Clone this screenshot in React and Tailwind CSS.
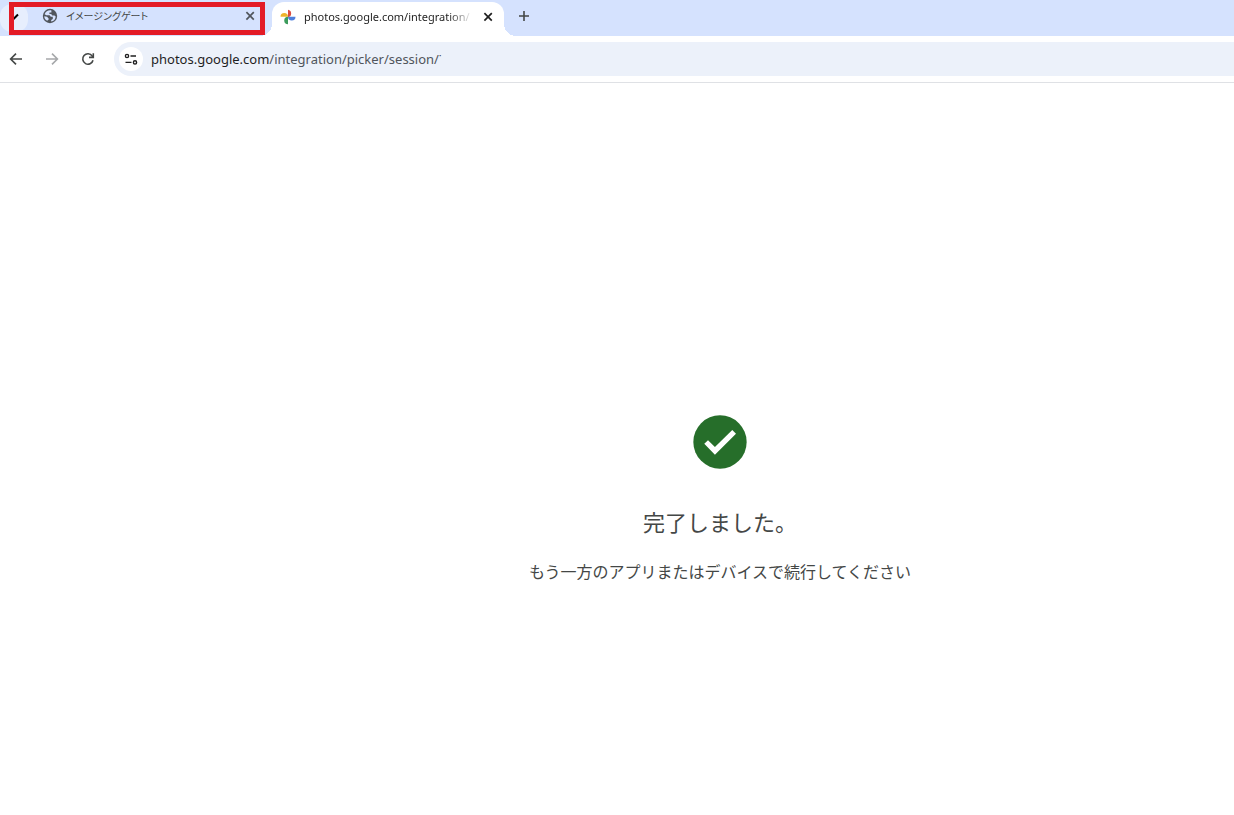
import { useState } from 'react';

const GlobeIcon = () => (
  <svg className="w-4 h-4 shrink-0" viewBox="0 0 16 16" aria-hidden="true">
    <circle cx="8" cy="8" r="7.2" fill="#50555c" />
    <path
      d="M9.4 2.4C6.6 1.8 3.6 3.4 2.6 6.2L4.4 7.2H7.6L8.8 8.8H10.8V11L9.2 12V13.6C11.8 13.2 13.6 11 13.7 8.4L12.4 7.4H10.2L9.2 6H7.4V4.6H9.4Z"
      fill="#d5e2fe"
    />
    <path d="M2.3 8.2L5 8.8L6.6 10.4V11.6L5.2 12.8C3.4 11.9 2.3 10.2 2.3 8.2Z" fill="#d5e2fe" />
  </svg>
);

const PinwheelIcon = () => (
  <svg className="w-4 h-4 shrink-0" viewBox="0 0 16 16" aria-hidden="true">
    <path d="M8 .8a3.75 3.75 0 0 1 0 7.4z" fill="#db4c40" />
    <path d="M.5 7.8a3.75 3.75 0 0 1 7.5 0z" fill="#eeb42c" />
    <path d="M8 15.3a3.75 3.75 0 0 1 0-7.5z" fill="#3c9c5c" />
    <path d="M15.5 7.8a3.75 3.75 0 0 1-7.5 0z" fill="#4f7fdc" />
  </svg>
);

const CloseIcon = () => (
  <svg className="w-4 h-4" viewBox="0 0 16 16" fill="none" stroke="currentColor" strokeWidth="1.7" aria-hidden="true">
    <path d="M4.4 4.2l7.4 7.4M11.8 4.2l-7.4 7.4" />
  </svg>
);

const PlusIcon = () => (
  <svg className="w-4 h-4" viewBox="0 0 16 16" fill="none" stroke="currentColor" strokeWidth="1.6" aria-hidden="true">
    <path d="M8 3v10M3 8h10" />
  </svg>
);

const ArrowIcon = ({ flip }) => (
  <svg
    className={flip ? 'w-4 h-4 rotate-180' : 'w-4 h-4'}
    viewBox="0 0 16 16"
    fill="none"
    stroke="currentColor"
    strokeWidth="1.6"
    aria-hidden="true"
  >
    <path d="M14 8H3M8 2.6L2.6 8L8 13.4" />
  </svg>
);

const ReloadIcon = () => (
  <svg className="w-4 h-4" viewBox="0 0 16 16" fill="none" stroke="currentColor" strokeWidth="1.6" aria-hidden="true">
    <path d="M13 9.2A5.2 5.2 0 1 1 12.2 5L13 6" />
    <path d="M13.3 2.2V6.4H9" />
  </svg>
);

const SiteInfoIcon = () => (
  <svg className="w-4 h-4" viewBox="0 0 16 16" fill="none" stroke="currentColor" strokeWidth="1.4" aria-hidden="true">
    <circle cx="4" cy="5" r="1.6" />
    <path d="M7.5 5h5.5M2.5 11.4h6" />
    <circle cx="12" cy="11.4" r="1.6" />
  </svg>
);

const DoneIcon = () => (
  <svg className="w-16 h-16" viewBox="0 0 24 24" aria-hidden="true">
    <circle cx="12" cy="12" r="10" fill="#266e2a" />
    <path d="M6.1 12.7L7.5 11.3L10.1 13.9L16.6 7.5L18 8.9L10.1 16.8Z" fill="#fff" />
  </svg>
);

const App = () => {
  const [url, setUrl] = useState('photos.google.com/integration/picker/session/˙');
  const slash = url.indexOf('/');
  const host = slash < 0 ? url : url.slice(0, slash);
  const path = slash < 0 ? '' : url.slice(slash);

  return (
    <div className="min-h-screen flex flex-col bg-white text-[#444746] font-['Noto_Sans','Noto_Sans_CJK_JP',sans-serif]">

      {/* Tab strip */}
      <div className="relative flex h-9 bg-[#d5e2fe]">
        <button aria-label="タブを検索" className="w-7 h-7 mt-1 flex items-center justify-end rounded-xl bg-[#e7eefd] text-black">
          <svg className="w-4 h-4 mr-1" viewBox="0 0 16 16" fill="none" stroke="currentColor" strokeWidth="2" aria-hidden="true">
            <path d="M2 4.5l4 4l4-4" />
          </svg>
        </button>

        <div className="flex items-center w-60 h-8 pl-3.5 pr-2.5">
          <GlobeIcon />
          <button className="flex-1 pl-2 text-left text-[10px] leading-4 whitespace-nowrap [font-feature-settings:'palt']">
            イメージングゲート
          </button>
          <button aria-label="タブを閉じる" className="text-[#50555c]"><CloseIcon /></button>
        </div>

        {/* Active tab */}
        <div className="relative flex items-center w-58 h-[34px] mt-0.5 ml-1 pl-2 pr-2 pb-1 bg-white rounded-t-xl">
          <span className="absolute -left-3 bottom-0 w-3 h-3 bg-[radial-gradient(circle_at_0_0,transparent_12px,#fff_12px)]" />
          <span className="absolute -right-3 bottom-0 w-3 h-3 bg-[radial-gradient(circle_at_100%_0,transparent_12px,#fff_12px)]" />
          <PinwheelIcon />
          <button className="flex-1 min-w-0 ml-2 mr-1 text-left text-[11px] leading-4 whitespace-nowrap text-[#1f1f1f] [mask-image:linear-gradient(to_right,#000_84%,transparent_98%)]">
            photos.google.com/integration/
          </button>
          <button aria-label="タブを閉じる" className="text-[#1f1f1f]"><CloseIcon /></button>
        </div>

        <button aria-label="新しいタブ" className="w-10 h-8 flex items-center justify-center text-[#444746]"><PlusIcon /></button>

        {/* Highlight frame over the first tab */}
        <div className="absolute left-[9px] top-0.5 w-64 h-[33px] border-5 border-[#e31b26] pointer-events-none" />
      </div>

      {/* Toolbar */}
      <div className="flex items-center h-[47px] pl-2 border-b border-[#dfe1e5]">
        <button aria-label="戻る" className="mr-5"><ArrowIcon /></button>
        <button aria-label="進む" className="mr-5 text-[#a6a8aa]"><ArrowIcon flip /></button>
        <button aria-label="再読み込み"><ReloadIcon /></button>
        <div className="flex flex-1 items-center h-[34px] ml-[18px] pl-[5px] rounded-l-full bg-[#ecf1fa]">
          <button aria-label="サイト情報" className="w-6 h-6 flex items-center justify-center rounded-full bg-white text-[#1f1f1f]">
            <SiteInfoIcon />
          </button>
          <div className="relative flex-1 ml-2 text-[13px] leading-5">
            <div aria-hidden="true" className="whitespace-pre">
              <span className="text-[#1f1f1f]">{host}</span>
              <span className="text-[#50555c]">{path}</span>
            </div>
            <input
              type="text"
              aria-label="アドレス"
              value={url}
              onChange={(e) => setUrl(e.target.value)}
              className="absolute inset-0 w-full bg-transparent text-transparent caret-black outline-none"
            />
          </div>
        </div>
      </div>

      {/* Completed message */}
      <main className="flex flex-1 flex-col items-center justify-center pl-[206px] pt-24 text-center">
        <DoneIcon />
        <h1 className="mt-8 text-[22px] leading-8 text-[#444746]">完了しました。</h1>
        <p className="mt-[22px] text-[16px] leading-6 text-[#444746]">もう一方のアプリまたはデバイスで続行してください</p>
      </main>
    </div>
  );
};

export default App;
